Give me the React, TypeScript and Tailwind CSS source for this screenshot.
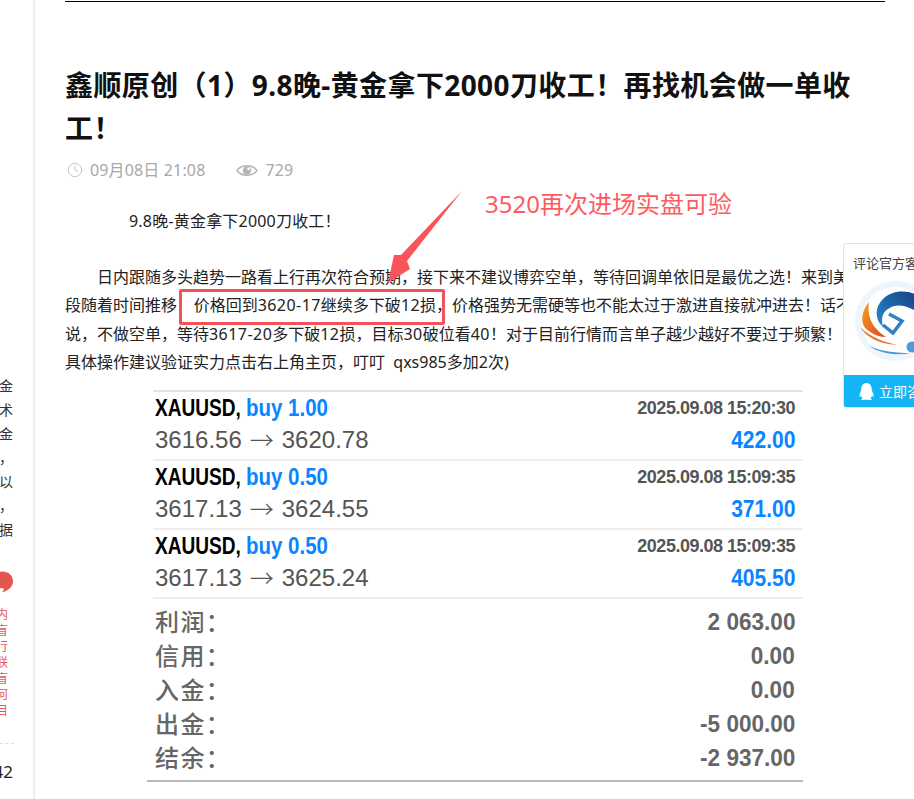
import type { ReactNode } from 'react';
import { Clock } from 'lucide-react';
import { FaQq } from 'react-icons/fa';

const cjk = 'font-["Noto_Sans","Noto_Sans_CJK_SC",sans-serif]';

const trades = [
    { lots: 'buy 1.00', from: '3616.56', to: '3620.78', time: '2025.09.08 15:20:30', profit: '422.00' },
    { lots: 'buy 0.50', from: '3617.13', to: '3624.55', time: '2025.09.08 15:09:35', profit: '371.00' },
    { lots: 'buy 0.50', from: '3617.13', to: '3625.24', time: '2025.09.08 15:09:35', profit: '405.50' },
];

const totals = [
    { label: '利润：', value: '2 063.00' },
    { label: '信用：', value: '0.00' },
    { label: '入金：', value: '0.00' },
    { label: '出金：', value: '-5 000.00' },
    { label: '结余：', value: '-2 937.00' },
];

// digits run slightly wider than the installed font
function Num({ children }: { children: ReactNode }) {
    return <span className="tracking-[0.45px]">{children}</span>;
}

function Sidebar() {
    return (
        <aside className={`w-[35px] shrink-0 border-r-2 border-[#eeeeee] h-full overflow-hidden pt-[374px] pr-[20px] ${cjk}`}>
            <div className="flex flex-col items-end text-[14px] leading-[24px] text-[#333333]">
                {['金', '术', '金', '，', '以', '，', '据'].map((c, i) => (
                    <span key={i} className="whitespace-nowrap">{c}</span>
                ))}
            </div>
            <div className="flex justify-end mt-[28px]">
                <svg width="15" height="25" viewBox="0 0 15 25">
                    <path d="M0 0 C9 -1 15 4 15 11 C15 18 9 22 2 24 C4 22 5 20 4 19 C2 19 1 19 0 19 Z" fill="#e5554f" />
                </svg>
            </div>
            <div className="flex flex-col items-end mt-[12px] text-[12px] leading-[16px] text-[#e8555a]">
                {['内', '盲', '行', '朕', '盲', '何', '目'].map((c, i) => (
                    <span key={i} className="whitespace-nowrap pr-[5px]">{c}</span>
                ))}
            </div>
            <div className="border-t border-dashed border-[#dddddd] w-[14px] ml-auto mt-[24px]" />
            <div className="text-[17px] leading-[24px] text-[#222222] flex justify-end mt-[16px]">42</div>
        </aside>
    );
}

function Annotations() {
    return (
        <>
            <span className="absolute left-[420px] top-[187px] text-[24px] leading-[34px] text-[#ff5a5f] whitespace-nowrap">
                3520再次进场实盘可验
            </span>
            <svg className="absolute left-[315px] top-[185px]" width="90" height="105" viewBox="0 0 90 105">
                <polygon points="82,6 27,76 30,84 8,98 14,70 21,70" fill="#f9545b" />
            </svg>
            <div className="absolute left-[114px] top-[289px] w-[266px] h-[36px] border-[3px] border-[#f2525a] rounded-[2px]" />
        </>
    );
}

function TradeTable() {
    return (
        <div className="w-[656px] ml-[82px] mt-[13px] font-['Liberation_Sans',sans-serif]">
            <div className="ml-[6px] border-t-2 border-[#e4e4e4]">
                {trades.map((t) => (
                    <div key={t.time + t.profit} className="h-[69px] pl-[2px] pr-[8px] border-b-2 border-[#eeeeee] flex justify-between">
                        <div>
                            <div className="flex text-[23px] leading-[32px] font-bold whitespace-nowrap">
                                <span className="w-[91px] origin-left scale-x-[0.83] text-black">XAUUSD,</span>
                                <span className="origin-left scale-x-[0.89] text-[#0a84ff]">{t.lots}</span>
                            </div>
                            <div className="text-[24px] leading-[32px] text-[#555555] flex items-center whitespace-nowrap">
                                {t.from}
                                <span className={`mx-[8px] font-light ${cjk}`}>→</span>
                                {t.to}
                            </div>
                        </div>
                        <div className="flex flex-col items-end">
                            <div className="text-[18px] leading-[32px] font-bold tracking-[-0.5px] text-[#555555]">{t.time}</div>
                            <div className="origin-right scale-x-[0.875] text-[24px] leading-[32px] font-bold text-[#0a84ff]">{t.profit}</div>
                        </div>
                    </div>
                ))}
            </div>
            <div className="pt-[6px] pb-[5px] px-[8px] border-b-2 border-[#bbbbbb]">
                {totals.map((r) => (
                    <div key={r.label} className="h-[34px] flex justify-between items-center text-[#666666]">
                        <span className={`text-[24px] leading-[34px] font-medium tracking-[1.4px] ${cjk}`}>{r.label}</span>
                        <span className="origin-right scale-x-[0.94] text-[24px] leading-[34px] font-bold">{r.value}</span>
                    </div>
                ))}
            </div>
        </div>
    );
}

function ServiceWidget() {
    return (
        <div className={`absolute left-[843px] top-[243px] w-[140px] h-[165px] bg-white border border-[#dfe3ee] rounded-[3px] overflow-hidden flex flex-col ${cjk}`}>
            <div className="text-[13px] leading-[18px] text-[#444444] pl-[9px] pt-[10px] whitespace-nowrap">评论官方客服</div>
            <div className="pl-[11px] pt-[9px] h-[103px]">
                <svg width="80" height="80" viewBox="0 0 80 80">
                    <defs>
                        <linearGradient id="logoBlue" x1="0" y1="1" x2="1" y2="0">
                            <stop offset="0" stopColor="#2a8ccc" />
                            <stop offset="1" stopColor="#123f85" />
                        </linearGradient>
                        <linearGradient id="logoOrange" x1="0" y1="0" x2="1" y2="1">
                            <stop offset="0" stopColor="#f5a01e" />
                            <stop offset="1" stopColor="#e2471f" />
                        </linearGradient>
                    </defs>
                    <circle cx="40" cy="40" r="40" fill="#eef6fc" />
                    <circle cx="40" cy="40" r="34" fill="#ffffff" />
                    <path d="M62 14 C50 8 36 10 28 18 C20 26 19 38 28 46 C26 38 27 32 33 28 C41 22 52 24 62 31 Z" fill="url(#logoBlue)" />
                    <path d="M34 33 L47 40 L38 52 L28 44" fill="none" stroke="#2f80c4" strokeWidth="3.5" />
                    <path d="M14 21 C5 32 5 45 14 50 C19 54 25 56 31 56 C22 50 11 40 14 21 Z" fill="url(#logoOrange)" />
                    <path d="M5 46 C11 56 24 63 42 64 C30 61 16 57 5 46 Z" fill="#f0702a" />
                    <path d="M14 65 C26 73 42 75 56 72 C42 72 28 71 14 65 Z" fill="#4f9ad6" />
                    <circle cx="57" cy="66" r="7" fill="#ffffff" />
                    <circle cx="57" cy="66" r="5.5" fill="#4a9be0" />
                </svg>
            </div>
            <div className="h-[32px] bg-[#14b4f5] text-white flex items-center pl-[15px] gap-[5px] text-[14px] whitespace-nowrap">
                <FaQq className="w-[15px] h-[17px]" />
                立即咨询
            </div>
        </div>
    );
}

export default function App() {
    return (
        <div className={`relative w-[914px] h-[799px] overflow-hidden bg-white flex ${cjk}`}>
            <Sidebar />
            <main className="relative ml-[30px] w-[820px] h-full shrink-0">
                <div className="border-t border-black mt-px" />
                <h1 className="mt-[62px] text-[28px] leading-[43px] font-bold tracking-[0.4px] text-[#111111]">
                    鑫顺原创（1）9.8晚-黄金拿下2000刀收工！再找机会做一单收工！
                </h1>
                <div className="mt-[8px] flex items-center h-[24px] text-[16px] tracking-[0.15px] text-[#a8a8a8]">
                    <Clock className="w-[16px] h-[16px] ml-[2px]" strokeWidth={1} />
                    <span className="ml-[7px]">09月08日 21:08</span>
                    <svg className="ml-[31px]" width="22" height="15" viewBox="0 0 21 14">
                        <path d="M1 7 C5 1 16 1 20 7 C16 13 5 13 1 7 Z" fill="none" stroke="#b5b5b5" strokeWidth="1.5" />
                        <circle cx="10.5" cy="7" r="4" fill="#b5b5b5" />
                        <circle cx="12" cy="5.5" r="1.3" fill="#ffffff" />
                    </svg>
                    <span className="ml-[7px]">729</span>
                </div>
                <p className="mt-[25px] pl-[64px] text-[16px] leading-[28.5px] tracking-[0.2px] text-[#222222]">9.8晚-黄金拿下2000刀收工！</p>
                <div className="mt-[27px] text-[16px] leading-[28.5px] text-[#222222] whitespace-nowrap">
                    <span className="pl-[32px]">日内跟随多头趋势一路看上行再次符合预期，接下来不建议博弈空单，等待回调单依旧是最优之选！来到美盘</span>
                    <br />
                    段随着时间推移&nbsp;&nbsp;&nbsp; 价格回到<Num>3620-17</Num>继续多下破<Num>12</Num>损，价格强势无需硬等也不能太过于激进直接就冲进去！话不多
                    <br />
                    说，不做空单，等待<Num>3617-20</Num>多下破<Num>12</Num>损，目标<Num>30</Num>破位看<Num>40</Num>！对于目前行情而言单子越少越好不要过于频繁！（
                    <br />
                    具体操作建议验证实力点击右上角主页，叮叮&nbsp;&nbsp;qxs985多加2次)
                </div>
                <TradeTable />
                <Annotations />
            </main>
            <ServiceWidget />
        </div>
    );
}
